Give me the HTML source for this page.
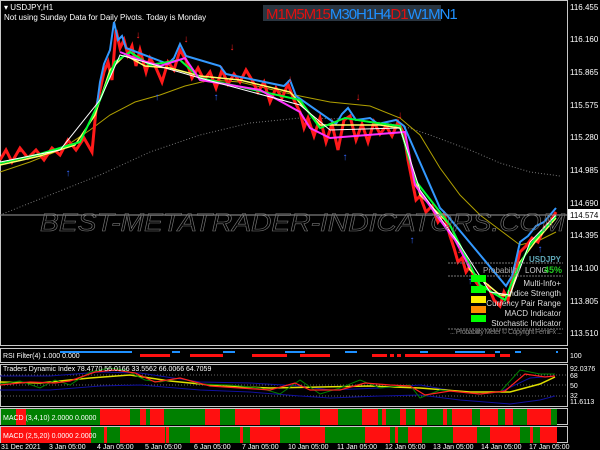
<!DOCTYPE html>
<html><head><meta charset="utf-8"><style>
body{margin:0;background:#000;width:600px;height:450px;overflow:hidden;font-family:"Liberation Sans",sans-serif}
svg{display:block}
</style></head><body>
<svg width="600" height="450" xmlns="http://www.w3.org/2000/svg" font-family="Liberation Sans, sans-serif">
<rect width="600" height="450" fill="#000"/>
<g fill="none" stroke="#c8c8c8" stroke-width="1">
<rect x="0.5" y="0.5" width="567" height="345"/>
<rect x="0.5" y="348.5" width="567" height="14"/>
<rect x="0.5" y="364.5" width="567" height="42"/>
<rect x="0.5" y="408.5" width="567" height="16"/>
<rect x="0.5" y="426.5" width="567" height="16"/>
</g>
<polyline fill="none" stroke="#777" stroke-dasharray="1,2" points="0,215 50,195 100,175 150,152 200,135 250,123 300,118 350,119 400,125 430,135 470,150 500,163 530,172 560,176"/>
<polyline fill="none" stroke="#b0a000" stroke-width="1" points="0,172 30,162 60,150 90,130 110,115 135,102 160,95 185,86 210,80 240,82 265,88 295,95 330,102 370,106 400,118 420,135 440,168 460,195 480,215 500,230 520,245 540,240 556,232"/>
<!-- candles jagged -->
<polyline fill="none" stroke="#ff1a1a" stroke-width="3" stroke-linejoin="miter" points="0,160 6,150 12,162 20,148 28,158 36,150 44,160 52,148 60,155 68,140 76,150 84,138 92,152 96,110 100,90 104,72 108,62 112,80 116,30 120,48 124,40 128,55 132,46 136,66 140,50 146,72 150,58 156,68 162,82 168,62 174,70 180,50 186,60 192,78 198,68 204,80 210,72 216,88 222,70 228,84 234,74 240,82 246,70 252,80 258,92 264,82 270,102 276,88 282,98 288,84 294,100 300,112 304,128 308,118 314,136 320,118 326,142 332,124 338,150 344,120 350,116 356,140 362,124 368,142 374,122 380,134 386,126 392,136 398,122 404,134 408,160 412,180 416,200 420,196 426,212 432,206 438,222 444,214 450,236 454,248 458,262 462,258 466,272 470,266 476,282 482,290 488,286 494,300 500,306 504,292 508,300 512,280 516,268 520,252 526,246 532,238 538,242 544,228 550,222 556,212"/>
<polyline fill="none" stroke="#3399ff" stroke-width="2" points="96,112 100,82 104,64 110,50 114,22 118,40 122,36 126,48 168,64 174,58 180,44 186,56 220,66 226,74 284,86 290,80 296,96 336,124 342,114 348,108 356,120 370,118 378,124 396,120 404,126 440,208 446,214 506,286 512,276 516,260 520,242 528,236 536,226 544,222 550,215 556,208"/>
<polyline fill="none" stroke="#ffff66" stroke-width="1.5" points="0,165 40,156 75,145 95,115 110,70 125,55 145,66 170,68 200,76 240,80 290,92 320,125 350,125 380,125 400,128 420,195 450,225 470,270 500,295 510,296 520,262 535,242 556,218"/>
<polyline fill="none" stroke="#00ff33" stroke-width="2" points="0,163 40,154 80,142 100,100 115,62 130,52 150,65 180,60 200,78 300,100 320,128 345,118 370,122 400,126 415,180 450,225 480,285 505,300 515,275 530,245 556,216"/>
<polyline fill="none" stroke="#ff33ff" stroke-width="2" points="120,52 140,60 160,66 185,58 200,80 260,90 300,112 310,128 330,138 405,132 415,185 440,220 455,240 470,268"/>
<polyline fill="none" stroke="#fff" stroke-width="1" points="0,162 60,150 100,100 120,55 200,78 300,105 330,130 400,128 420,190 460,245 490,292 510,295 530,242 556,215"/>
<g fill="#ff2020" font-size="10" text-anchor="middle">
<text x="138" y="38">↓</text><text x="186" y="42">↓</text><text x="232" y="50">↓</text><text x="290" y="82">↓</text><text x="358" y="100">↓</text><text x="400" y="118">↓</text><text x="459" y="253">↓</text><text x="540" y="240">↓</text><text x="20" y="152">↓</text>
</g>
<g fill="#3366ff" font-size="10" text-anchor="middle">
<text x="68" y="176">↑</text><text x="157" y="100">↑</text><text x="216" y="100">↑</text><text x="345" y="160">↑</text><text x="412" y="243">↑</text><text x="470" y="284">↑</text><text x="540" y="252">↑</text>
</g>
<line x1="0" y1="215" x2="567" y2="215" stroke="#9a9a9a"/>
<text x="40" y="231" font-size="25" font-style="italic" fill="none" stroke="#777" stroke-width="0.6" textLength="525" lengthAdjust="spacingAndGlyphs">BEST-METATRADER-INDICATORS.COM</text>
<text x="4" y="10" fill="#fff" font-size="8">▾ USDJPY,H1</text>
<text x="4" y="20" fill="#fff" font-size="8">Not using Sunday Data for Daily Pivots.  Today is Monday</text>
<rect x="263" y="5" width="178" height="16" fill="#2a3540"/>
<text x="266" y="19" font-size="15" letter-spacing="-1"><tspan fill="#e01010">M1M5M15</tspan><tspan fill="#1e90ff">M30H1H4</tspan><tspan fill="#e01010">D1</tspan><tspan fill="#1e90ff">W1MN1</tspan></text>
<g fill="#fff" font-size="8">
<text x="570" y="10">116.455</text><text x="570" y="42">116.160</text><text x="570" y="75">115.865</text><text x="570" y="108">115.575</text><text x="570" y="140">115.280</text><text x="570" y="173">114.985</text><text x="570" y="206">114.690</text><text x="570" y="238">114.395</text><text x="570" y="271">114.100</text><text x="570" y="304">113.805</text><text x="570" y="336">113.510</text>
</g>
<rect x="568" y="209" width="32" height="11" fill="#fff"/>
<text x="570" y="218" fill="#000" font-size="8">114.574</text>
<text x="561" y="262" text-anchor="end" fill="#5fa8b8" font-size="8" font-weight="bold">USDJPY</text>
<line x1="448" y1="263" x2="563" y2="263" stroke="#777" stroke-dasharray="2,1"/>
<text x="483" y="273" fill="#aaa" font-size="8">Probability</text>
<text x="525" y="273" fill="#ccc" font-size="8">LONG</text>
<text x="544" y="273" fill="#2c2" font-size="9" font-weight="bold">45%</text>
<line x1="448" y1="276" x2="563" y2="276" stroke="#777" stroke-dasharray="2,1"/>
<rect x="471" y="275" width="15" height="7" fill="#00ff00"/>
<rect x="471" y="286" width="15" height="7" fill="#00ff00"/>
<rect x="471" y="296" width="15" height="7" fill="#ffee00"/>
<rect x="471" y="306" width="15" height="7" fill="#ff8c00"/>
<rect x="471" y="315" width="15" height="7" fill="#00ff00"/>
<g fill="#ddd" font-size="8" text-anchor="end">
<text x="561" y="286">Multi-Info+</text><text x="561" y="296">Indice Strength</text><text x="561" y="306">Currency Pair Range</text><text x="561" y="316">MACD Indicator</text><text x="561" y="326">Stochastic Indicator</text>
</g>
<line x1="448" y1="329" x2="563" y2="329" stroke="#777" stroke-dasharray="2,1"/>
<text x="450" y="334" fill="#888" font-size="7" textLength="112">... Probability Meter © Copyright FemiFx ...</text>
<g fill="#1e90ff"><rect x="60" y="351" width="72" height="2"/><rect x="172" y="351" width="8" height="2"/><rect x="223" y="351" width="12" height="2"/><rect x="285" y="351" width="20" height="2"/><rect x="345" y="351" width="12" height="2"/><rect x="420" y="351" width="8" height="2"/><rect x="455" y="351" width="30" height="2"/><rect x="495" y="351" width="5" height="2"/><rect x="515" y="351" width="6" height="2"/><rect x="556" y="351" width="2" height="2"/></g>
<g fill="#ff1010"><rect x="140" y="354" width="30" height="3"/><rect x="190" y="354" width="33" height="3"/><rect x="252" y="354" width="35" height="3"/><rect x="300" y="354" width="30" height="3"/><rect x="372" y="354" width="15" height="3"/><rect x="390" y="354" width="4" height="3"/><rect x="397" y="354" width="4" height="3"/><rect x="405" y="354" width="90" height="3"/><rect x="500" y="354" width="10" height="3"/></g>
<text x="3" y="358" fill="#fff" font-size="7">RSI Filter(4) 1.000 0.000</text>
<text x="570" y="358" fill="#fff" font-size="7">100</text>
<line x1="1" y1="375" x2="567" y2="375" stroke="#666" stroke-dasharray="1,2"/>
<line x1="1" y1="385" x2="567" y2="385" stroke="#666" stroke-dasharray="1,2"/>
<line x1="1" y1="396" x2="567" y2="396" stroke="#666" stroke-dasharray="1,2"/>
<polyline fill="none" stroke="#1010a0" points="0,376 50,376 100,372 140,373 200,382 250,383 300,386 330,390 380,388 420,385 460,392 500,392 530,378 555,376"/>
<polyline fill="none" stroke="#1010a0" points="0,390 50,390 100,386 140,385 200,390 250,392 300,396 330,398 380,396 420,395 460,400 510,404 540,400 555,396"/>
<polyline fill="none" stroke="#e0e000" stroke-width="1.5" points="0,382 40,383 90,378 130,375 170,381 220,386 270,388 320,387 370,386 420,388 470,392 510,392 540,384 555,377"/>
<polyline fill="none" stroke="#008000" stroke-width="1" points="0,384 20,381 40,388 55,380 70,385 90,372 110,368 125,370 145,380 160,382 180,378 200,384 230,385 260,388 280,394 300,380 320,394 340,388 360,380 380,388 410,385 420,398 440,390 460,392 480,394 500,392 520,370 540,374 555,374"/>
<polyline fill="none" stroke="#ff2020" stroke-width="1.2" points="0,385 30,382 55,383 70,381 95,372 115,370 135,373 155,382 180,378 210,386 240,388 270,390 295,383 310,390 340,390 365,383 390,385 410,386 425,395 450,391 480,394 505,391 525,374 545,377 555,376"/>
<text x="3" y="371" fill="#fff" font-size="7">Traders Dynamic Index 78.4770 56.0166 33.5562 66.0066 64.7059</text>
<g fill="#fff" font-size="7"><text x="570" y="371">92.0376</text><text x="570" y="378">68</text><text x="570" y="388">50</text><text x="570" y="398">32</text><text x="570" y="404">11.6113</text></g>
<rect x="1" y="409" width="556" height="16" fill="#008000"/>
<g fill="#ff1010">
<rect x="16" y="409" width="10" height="16"/><rect x="100" y="409" width="30" height="16"/><rect x="140" y="409" width="6" height="16"/><rect x="150" y="409" width="14" height="16"/><rect x="205" y="409" width="15" height="16"/><rect x="235" y="409" width="25" height="16"/><rect x="280" y="409" width="20" height="16"/><rect x="320" y="409" width="18" height="16"/><rect x="362" y="409" width="16" height="16"/><rect x="382" y="409" width="4" height="16"/><rect x="400" y="409" width="6" height="16"/><rect x="415" y="409" width="12" height="16"/><rect x="443" y="409" width="4" height="16"/><rect x="452" y="409" width="20" height="16"/><rect x="480" y="409" width="18" height="16"/><rect x="505" y="409" width="8" height="16"/><rect x="527" y="409" width="24" height="16"/>
</g>
<text x="3" y="420" fill="#fff" font-size="7">MACD (3,4,10) 2.0000 0.0000</text>
<rect x="1" y="427" width="556" height="16" fill="#008000"/>
<g fill="#ff1010">
<rect x="1" y="427" width="90" height="16"/><rect x="104" y="427" width="3" height="16"/><rect x="120" y="427" width="45" height="16"/><rect x="166" y="427" width="3" height="16"/><rect x="190" y="427" width="30" height="16"/><rect x="240" y="427" width="3" height="16"/><rect x="250" y="427" width="30" height="16"/><rect x="300" y="427" width="25" height="16"/><rect x="365" y="427" width="25" height="16"/><rect x="395" y="427" width="3" height="16"/><rect x="408" y="427" width="14" height="16"/><rect x="453" y="427" width="24" height="16"/><rect x="490" y="427" width="30" height="16"/><rect x="530" y="427" width="3" height="16"/><rect x="540" y="427" width="17" height="16"/>
</g>
<text x="3" y="438" fill="#fff" font-size="7">MACD (2,5,20) 0.0000 2.0000</text>
<g fill="#fff" font-size="7">
<text x="1" y="449">31 Dec 2021</text><text x="49" y="449">3 Jan 05:00</text><text x="97" y="449">4 Jan 05:00</text><text x="145" y="449">5 Jan 05:00</text><text x="194" y="449">6 Jan 05:00</text><text x="242" y="449">7 Jan 05:00</text><text x="288" y="449">10 Jan 05:00</text><text x="337" y="449">11 Jan 05:00</text><text x="385" y="449">12 Jan 05:00</text><text x="433" y="449">13 Jan 05:00</text><text x="481" y="449">14 Jan 05:00</text><text x="529" y="449">17 Jan 05:00</text>
</g>
</svg>
</body></html>
